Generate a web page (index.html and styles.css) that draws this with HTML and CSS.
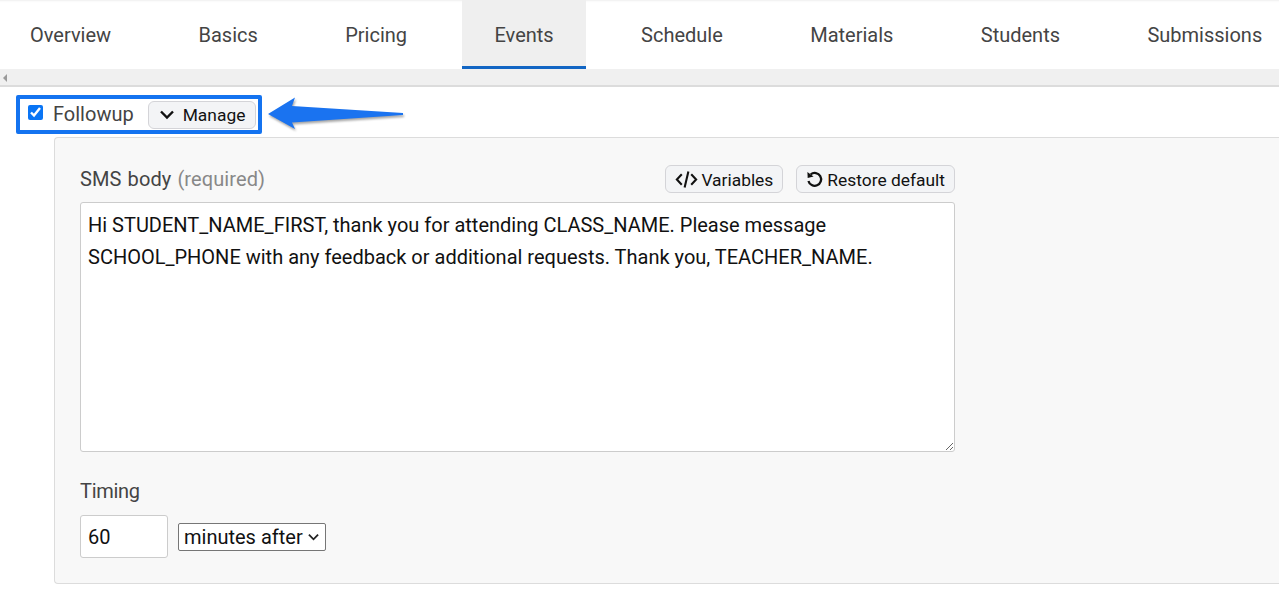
FILE: index.html
```html
<!DOCTYPE html>
<html lang="en">
<head>
  <meta charset="UTF-8">
  <title>Events</title>
  <link rel="stylesheet" href="styles.css">
</head>
<body>

<nav class="tabs">
  <a href="#" class="tab">Overview</a>
  <a href="#" class="tab">Basics</a>
  <a href="#" class="tab">Pricing</a>
  <a href="#" class="tab active">Events</a>
  <a href="#" class="tab">Schedule</a>
  <a href="#" class="tab">Materials</a>
  <a href="#" class="tab">Students</a>
  <a href="#" class="tab">Submissions</a>
</nav>
<div class="tabs-scroll"><span class="scroll-left"></span></div>

<main class="content">
  <div class="event-row">
    <div class="highlight">
      <input type="checkbox" class="event-check" checked>
      <span class="event-name">Followup</span>
      <button class="btn btn-manage">
        <svg viewBox="0 0 14 10" width="14" height="10"><path d="M1 1.500 7 7.500 13 1.500" fill="none" stroke="#111" stroke-width="2.400"/></svg>
        Manage
      </button>
    </div>
    <svg class="arrow" viewBox="0 0 140 40" width="140" height="40">
      <path d="M2 19 L29 2.500 L26 11 L137 18 L137 20 L26 27.500 L29 34 Z" fill="#1a73f0"/>
    </svg>
  </div>

  <section class="panel">
    <div class="field-head">
      <label class="field-label">SMS body <span class="muted">(required)</span></label>
      <div class="field-actions">
        <button class="btn">
          <svg viewBox="0 0 24 18" width="23" height="17"><path d="M7 3.500 1.800 9 7 14.500M17 3.500 22.200 9 17 14.500M14 .5 10 17.500" fill="none" stroke="#111" stroke-width="2.200"/></svg>
          Variables
        </button>
        <button class="btn btn-restore">
          <svg viewBox="0 0 18 18" width="17" height="17"><path d="M5 3.500A6.800 6.800 0 1 1 2.600 10.500" fill="none" stroke="#111" stroke-width="2.400"/><path d="M1.500 1 1.800 7.500 8 5.800Z" fill="#111"/></svg>
          Restore default
        </button>
      </div>
    </div>
    <textarea class="sms-body">Hi STUDENT_NAME_FIRST, thank you for attending CLASS_NAME. Please message SCHOOL_PHONE with any feedback or additional requests. Thank you, TEACHER_NAME.</textarea>

    <label class="field-label timing-label">Timing</label>
    <div class="timing-row">
      <input type="text" class="timing-input" value="60">
      <select class="timing-select">
        <option>minutes after</option>
      </select>
    </div>
  </section>
</main>

</body>
</html>
```

FILE: styles.css
```css
body {
  margin: 0;
  font-family: 'Roboto', sans-serif;
  background: white;
  color: #111;
  overflow: hidden;
}
.tabs {
  display: flex;
  gap: 23.400px;
  height: 69px;
  margin-left: -2px;
  overflow: hidden;
  box-shadow: inset 0 3px 3px -3px #ddd;
}
.tab {
  flex: none;
  box-sizing: border-box;
  height: 69px;
  padding: 24px 32px 0;
  color: #444;
  font-size: 20px;
  line-height: 22px;
  text-decoration: none;
}
.tab.active {
  background: #efefef;
  border-bottom: 3px solid #1266c4;
}
.tabs-scroll {
  box-sizing: border-box;
  height: 18px;
  padding: 5px 0 0 3px;
  background: #f0f0f0;
  border-bottom: 2px solid #dcdcdc;
}
.scroll-left {
  display: block;
  width: 0;
  height: 0;
  border-top: 4px solid transparent;
  border-bottom: 4px solid transparent;
  border-right: 4px solid #9a9a9a;
}
.content {
  padding: 8px 0 0 16px;
}
.event-row {
  display: flex;
  align-items: center;
  height: 39px;
  gap: 4px;
}
.highlight {
  display: flex;
  align-items: center;
  box-sizing: border-box;
  width: 246px;
  height: 39px;
  padding-left: 8px;
  border: 4px solid #1473f0;
  border-radius: 2px;
}
.event-check {
  width: 15px;
  height: 15px;
  margin: 0 10px 4px 0;
  accent-color: #0a75f5;
}
.event-name {
  font-size: 20px;
  color: #444;
  margin: 0 14px 2px 0;
}
.btn {
  display: inline-flex;
  align-items: center;
  gap: 3px;
  box-sizing: border-box;
  height: 28px;
  padding: 0 9px;
  font-family: inherit;
  font-size: 17.400px;
  color: #111;
  background: #f3f4f6;
  border: 1px solid #d4d4d8;
  border-radius: 6px;
}
.btn svg {
  flex: none;
}
.btn-manage {
  width: 108px;
  gap: 9px;
  padding: 0 9px 0 11px;
}
.arrow {
  filter: drop-shadow(1px 2px 1px rgba(0, 0, 0, 0.35));
}
.panel {
  box-sizing: border-box;
  height: 447px;
  margin: 3px 0 0 38px;
  padding: 27px 0 0 25px;
  background: #f8f8f8;
  border: 1px solid #dcdcdc;
  border-right: none;
  border-radius: 4px 0 0 4px;
}
.field-head {
  display: flex;
  justify-content: space-between;
  align-items: center;
  width: 875px;
  height: 28px;
  margin-bottom: 9px;
}
.field-label {
  display: block;
  font-size: 20px;
  color: #444;
}
.field-head .field-label {
  word-spacing: 1px;
  letter-spacing: 0.1px;
}
.muted {
  color: #888;
}
.field-actions {
  display: flex;
  gap: 13px;
}
.field-actions .btn {
  padding-top: 1px;
}
.field-actions .btn-restore {
  gap: 4px;
  padding-right: 9px;
}
.sms-body {
  display: block;
  box-sizing: border-box;
  width: 875px;
  height: 250px;
  padding: 7px;
  font-family: inherit;
  font-size: 20px;
  line-height: 31.500px;
  color: #111;
  background: white;
  border: 1px solid #ccc;
  border-radius: 3px;
}
.timing-label {
  margin-top: 28px;
  line-height: 23px;
  letter-spacing: -0.300px;
}
.timing-row {
  display: flex;
  align-items: center;
  gap: 10px;
  margin-top: 12px;
}
.timing-input {
  box-sizing: border-box;
  width: 88px;
  height: 43px;
  padding: 0 7px;
  font-family: inherit;
  font-size: 20px;
  color: #111;
  background: white;
  border: 1px solid #ccc;
  border-radius: 3px;
}
.timing-select {
  appearance: none;
  box-sizing: border-box;
  width: 148px;
  height: 28px;
  padding-left: 5px;
  font-family: inherit;
  font-size: 20px;
  color: #111;
  background: white url("data:image/svg+xml,%3Csvg xmlns='http://www.w3.org/2000/svg' viewBox='0 0 12 8'%3E%3Cpath d='M1 1.500 6 6.500 11 1.500' fill='none' stroke='%23222' stroke-width='2'/%3E%3C/svg%3E") no-repeat right 6px center / 11px 8px;
  border: 1px solid #767676;
  border-radius: 2px;
}
```
